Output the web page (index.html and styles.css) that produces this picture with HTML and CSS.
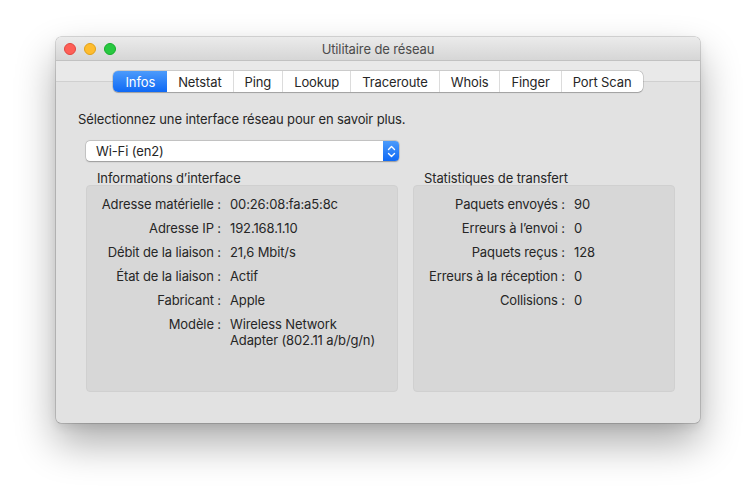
FILE: index.html
```html
<!DOCTYPE html>
<html lang="fr">
<head>
<meta charset="utf-8">
<title>Utilitaire de réseau</title>
<link rel="stylesheet" href="styles.css">
</head>
<body>
<div class="desk">
  <div class="window">
    <div class="titlebar">
      <div class="lights">
        <span class="light red"></span>
        <span class="light yellow"></span>
        <span class="light green"></span>
      </div>
      <div class="title">Utilitaire de réseau</div>
    </div>
    <div class="tabbar">
      <div class="segmented">
        <span class="seg active">Infos</span>
        <span class="seg">Netstat</span>
        <span class="seg">Ping</span>
        <span class="seg">Lookup</span>
        <span class="seg">Traceroute</span>
        <span class="seg">Whois</span>
        <span class="seg">Finger</span>
        <span class="seg">Port Scan</span>
      </div>
    </div>
    <div class="tabview">
      <p class="intro">Sélectionnez une interface réseau pour en savoir plus.</p>
      <div class="popup">
        <span class="popup-label">Wi-Fi (en2)</span>
        <span class="popup-arrows">
          <svg width="9" height="13" viewBox="0 0 9 13"><path d="M1.5 4.5 L4.5 1.5 L7.5 4.5 M1.5 8.5 L4.5 11.5 L7.5 8.5" fill="none" stroke="#fff" stroke-width="1.4" stroke-linecap="round" stroke-linejoin="round"/></svg>
        </span>
      </div>
      <div class="groups">
        <section class="group group-info">
          <h2 class="group-title">Informations d’interface</h2>
          <div class="box">
            <dl class="rows">
              <dt>Adresse matérielle :</dt><dd>00:26:08:fa:a5:8c</dd>
              <dt>Adresse IP :</dt><dd>192.168.1.10</dd>
              <dt>Débit de la liaison :</dt><dd>21,6 Mbit/s</dd>
              <dt>État de la liaison :</dt><dd>Actif</dd>
              <dt>Fabricant :</dt><dd>Apple</dd>
              <dt>Modèle :</dt><dd>Wireless Network Adapter (802.11 a/b/g/n)</dd>
            </dl>
          </div>
        </section>
        <section class="group group-stats">
          <h2 class="group-title">Statistiques de transfert</h2>
          <div class="box">
            <dl class="rows">
              <dt>Paquets envoyés :</dt><dd>90</dd>
              <dt>Erreurs à l’envoi :</dt><dd>0</dd>
              <dt>Paquets reçus :</dt><dd>128</dd>
              <dt>Erreurs à la réception :</dt><dd>0</dd>
              <dt>Collisions :</dt><dd>0</dd>
            </dl>
          </div>
        </section>
      </div>
    </div>
  </div>
</div>
</body>
</html>
```

FILE: styles.css
```css
* { box-sizing: border-box; }
html, body {
  margin: 0;
  padding: 0;
  background: #ffffff;
}
body {
  font-family: Inter, "Noto Sans", "Liberation Sans", sans-serif;
  font-size: 13px;
  letter-spacing: -0.12px;
  color: #262626;
  width: 756px;
  height: 497px;
  overflow: hidden;
}
.desk {
  padding: 37px 0 0 56px;
}
.window {
  width: 644px;
  height: 386px;
  border-radius: 5px;
  background: #e2e2e2;
  box-shadow: 0 0 0 0.5px rgba(0,0,0,0.28), 0 20px 40px rgba(0,0,0,0.33), 0 4px 10px rgba(0,0,0,0.08);
  overflow: hidden;
  display: flex;
  flex-direction: column;
}
.titlebar {
  height: 24px;
  flex: none;
  display: flex;
  align-items: center;
  background: linear-gradient(to bottom, #ebebeb, #d6d6d6);
  border-bottom: 1px solid #c2c2c2;
}
.lights {
  display: flex;
  gap: 8px;
  padding-left: 8px;
  margin-top: 1px;
}
.light {
  width: 12px;
  height: 12px;
  border-radius: 50%;
}
.red { background: #fe5f57; border: 0.5px solid #e2463f; }
.yellow { background: #febc2e; border: 0.5px solid #e1a116; }
.green { background: #28c840; border: 0.5px solid #14ae2a; }
.title {
  flex: 1;
  text-align: center;
  margin-left: -60px;
  color: #4b4b4b;
  font-size: 13px;
  margin-top: 1px;
}
.tabbar {
  flex: none;
  height: 31px;
  padding-top: 10px;
  display: flex;
  justify-content: center;
  align-items: flex-start;
  background: linear-gradient(to bottom, #e9e9e9 0, #e9e9e9 20px, #d0d0d0 20px, #d0d0d0 21px, #e2e2e2 21px);
}
.segmented {
  display: flex;
  height: 21px;
  background: #fff;
  border-radius: 5px;
  box-shadow: 0 0 0 0.5px rgba(0,0,0,0.22), 0 0.5px 1px rgba(0,0,0,0.2);
  overflow: hidden;
}
.seg {
  display: flex;
  align-items: center;
  padding: 0 11px;
  color: #262626;
  font-size: 13px;
  border-left: 1px solid #dcdcdc;
}
.seg:first-child { border-left: none; }
.seg.active {
  background: linear-gradient(to bottom, #4c9bfb, #0f69f5);
  color: #fff;
  border-left: none;
  padding: 0 12px;
}
.seg.active + .seg { border-left: none; }
.tabview {
  flex: 1;
  padding: 0 25px 0 22px;
}
.intro {
  margin: 19px 0 0 0;
  line-height: 16px;
  font-size: 13px;
  color: #262626;
}
.popup {
  margin: 14px 0 0 8px;
  width: 313px;
  height: 20px;
  background: #fff;
  border-radius: 4px;
  box-shadow: 0 0 0 0.5px rgba(0,0,0,0.2), 0 0.5px 1.5px rgba(0,0,0,0.25);
  display: flex;
  align-items: center;
  overflow: hidden;
}
.popup-label {
  flex: 1;
  padding-left: 10px;
  color: #262626;
}
.popup-arrows {
  width: 16px;
  height: 20px;
  display: flex;
  align-items: center;
  justify-content: center;
  background: linear-gradient(to bottom, #4c9bfb, #0f69f5);
}
.groups {
  display: flex;
  gap: 15px;
  margin: 10px 0 0 8px;
}
.group-title {
  margin: 0 0 0 11px;
  font-size: 13px;
  font-weight: normal;
  line-height: 14px;
  color: #262626;
}
.group-info { width: 312px; }
.group-stats { width: 262px; }
.box {
  height: 207px;
  background: #d7d7d7;
  border: 1px solid #d0d0d0;
  border-radius: 4px;
  padding-top: 10px;
}
.rows {
  display: grid;
  column-gap: 9px;
  row-gap: 8px;
  margin: 0;
  line-height: 16px;
}
.group-info .rows { grid-template-columns: 134px 150px; }
.group-stats .rows { grid-template-columns: 151px 80px; }
.rows dt {
  text-align: right;
  white-space: nowrap;
  color: #262626;
}
.rows dd {
  margin: 0;
  color: #262626;
}
```
